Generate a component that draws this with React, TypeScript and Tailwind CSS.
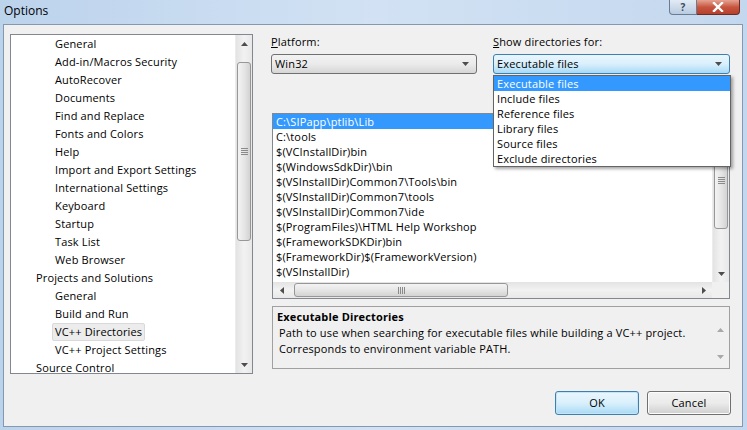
import React from "react";

const font = { fontFamily: '"Open Sans", "Noto Sans", sans-serif' };

function Arrow({ dir, faded }: { dir: "up" | "down" | "left" | "right"; faded?: boolean }) {
  const pts = {
    up: "0,4 3.5,0 7,4",
    down: "0,0 3.5,4 7,0",
    left: "4,0 0,3.5 4,7",
    right: "0,0 4,3.5 0,7",
  }[dir];
  const w = dir === "up" || dir === "down" ? 7 : 4;
  const h = dir === "up" || dir === "down" ? 4 : 7;
  return (
    <svg width={w} height={h} viewBox={`0 0 ${w} ${h}`}>
      <polygon points={pts} fill={faded ? "#a8a8a8" : "#4d4d4d"} />
    </svg>
  );
}

function Grip({ vertical }: { vertical?: boolean }) {
  return vertical ? (
    <div className="flex flex-col gap-[1px]">
      <div className="w-[7px] h-[1px] bg-[#8a8a8a]" />
      <div className="w-[7px] h-[1px] bg-[#8a8a8a]" />
      <div className="w-[7px] h-[1px] bg-[#8a8a8a]" />
      <div className="w-[7px] h-[1px] bg-[#8a8a8a]" />
    </div>
  ) : (
    <div className="flex gap-[1px]">
      <div className="h-[7px] w-[1px] bg-[#8a8a8a]" />
      <div className="h-[7px] w-[1px] bg-[#8a8a8a]" />
      <div className="h-[7px] w-[1px] bg-[#8a8a8a]" />
      <div className="h-[7px] w-[1px] bg-[#8a8a8a]" />
    </div>
  );
}

function VScroll({ thumbTop, thumbHeight }: { thumbTop: number; thumbHeight: number }) {
  return (
    <div className="w-[17px] h-full flex flex-col bg-gradient-to-r from-[#e3e3e3] via-[#f2f2f2] to-[#e8e8e8] border-l border-[#ececec]">
      <div className="h-[17px] flex items-center justify-center shrink-0">
        <Arrow dir="up" />
      </div>
      <div className="flex-1 relative">
        <div
          className="absolute left-[1px] right-[1px] rounded-[3px] border border-[#979797] bg-gradient-to-r from-[#f3f3f3] via-[#e6e6e6] to-[#d3d3d3] flex items-center justify-center"
          style={{ top: thumbTop, height: thumbHeight }}
        >
          <Grip vertical />
        </div>
      </div>
      <div className="h-[17px] flex items-center justify-center shrink-0">
        <Arrow dir="down" />
      </div>
    </div>
  );
}

const treeItems: [string, number][] = [
  ["General", 1],
  ["Add-in/Macros Security", 1],
  ["AutoRecover", 1],
  ["Documents", 1],
  ["Find and Replace", 1],
  ["Fonts and Colors", 1],
  ["Help", 1],
  ["Import and Export Settings", 1],
  ["International Settings", 1],
  ["Keyboard", 1],
  ["Startup", 1],
  ["Task List", 1],
  ["Web Browser", 1],
  ["Projects and Solutions", 0],
  ["General", 1],
  ["Build and Run", 1],
  ["VC++ Directories", 1],
  ["VC++ Project Settings", 1],
  ["Source Control", 0],
];

const dirs = [
  "C:\\SIPapp\\ptlib\\Lib",
  "C:\\tools",
  "$(VCInstallDir)bin",
  "$(WindowsSdkDir)\\bin",
  "$(VSInstallDir)Common7\\Tools\\bin",
  "$(VSInstallDir)Common7\\tools",
  "$(VSInstallDir)Common7\\ide",
  "$(ProgramFiles)\\HTML Help Workshop",
  "$(FrameworkSDKDir)bin",
  "$(FrameworkDir)$(FrameworkVersion)",
  "$(VSInstallDir)",
];

const kinds = [
  "Executable files",
  "Include files",
  "Reference files",
  "Library files",
  "Source files",
  "Exclude directories",
];

export default function App() {
  return (
    <div
      className="w-[747px] h-[430px] overflow-hidden flex flex-col bg-gradient-to-r from-[#bcd3ec] via-[#d2e2f4] to-[#c3d7ee] text-[11px] tracking-[0.15px] text-black"
      style={font}
    >
      {/* title bar */}
      <div className="h-[24px] shrink-0 flex items-start relative">
        <span className="ml-[4px] mt-[2px] text-[12px] leading-[18px] tracking-normal">Options</span>
        <div className="ml-auto mr-[7px] flex">
          <div className="w-[28px] h-[15px] rounded-bl-[4px] border border-t-0 border-[#6b7c92] bg-gradient-to-b from-[#e2ebf5] to-[#b9cbe0] flex items-center justify-center text-[10px] leading-none font-bold text-[#3b4a5c]">
            ?
          </div>
          <div className="w-[43px] h-[15px] rounded-br-[4px] border border-t-0 border-l-0 border-[#6f2a22] bg-gradient-to-b from-[#e5a393] via-[#c8553f] to-[#b5402c] flex items-center justify-center">
            <svg width="12" height="10" viewBox="0 0 12 10">
              <path d="M2 1 L10 9 M10 1 L2 9" stroke="#fff" strokeWidth="2.4" strokeLinecap="square" />
            </svg>
          </div>
        </div>
      </div>

      {/* client area */}
      <div className="flex-1 ml-[3px] mr-[4px] mb-[3px] bg-[#f0f0f0] border border-[#8498b0] flex flex-col">
        <div className="flex pt-[9px] pl-[6px]">
          {/* tree */}
          <div className="w-[243px] h-[340px] border border-[#828790] bg-white flex overflow-hidden">
            <div className="flex-1 flex flex-col">
              {treeItems.map(([label, level], i) => (
                <div key={i} className="h-[18px] shrink-0 flex items-center">
                  <span
                    className={
                      level === 1
                        ? i === 16
                          ? "ml-[41px] px-[2px] h-[18px] leading-[16px] rounded-[2px] border border-[#d9d9d9] bg-[#ececec]"
                          : "ml-[44px]"
                        : "ml-[25px]"
                    }
                  >
                    {label}
                  </span>
                </div>
              ))}
            </div>
            <VScroll thumbTop={10} thumbHeight={179} />
          </div>

          {/* right column */}
          <div className="ml-[18px] w-[459px] flex flex-col">
            <div className="flex relative">
              <div className="w-[206px] flex flex-col">
                <span className="leading-[14px] mt-[1px]">
                  <span className="underline">P</span>latform:
                </span>
                <div className="mt-[5px] h-[20px] rounded-[3px] border border-[#707070] bg-gradient-to-b from-[#f2f2f2] via-[#ebebeb] to-[#d6d6d6] flex items-center pl-[3px] pr-[7px]">
                  <span className="flex-1">Win32</span>
                  <Arrow dir="down" />
                </div>
              </div>
              <div className="ml-[16px] w-[237px] flex flex-col">
                <span className="leading-[14px] mt-[1px]">
                  <span className="underline">S</span>how directories for:
                </span>
                <div className="mt-[5px] h-[20px] rounded-[3px] border border-[#3c7fb1] bg-gradient-to-b from-[#eaf6fd] via-[#d9f0fc] to-[#a7d9f5] flex items-center pl-[3px] pr-[7px]">
                  <span className="flex-1">Executable files</span>
                  <Arrow dir="down" />
                </div>
              </div>
              {/* dropdown */}
              <div className="absolute left-[222px] top-[41px] w-[238px] z-10 bg-white border border-[#646464] shadow-[2px_2px_3px_rgba(0,0,0,0.35)] flex flex-col">
                {kinds.map((k, i) => (
                  <div
                    key={k}
                    className={
                      "h-[15px] leading-[15px] pl-[3px] " + (i === 0 ? "bg-[#3399ff] text-white" : "")
                    }
                  >
                    {k}
                  </div>
                ))}
              </div>
            </div>

            {/* list */}
            <div className="mt-[39px] ml-[1px] w-[458px] h-[186px] border border-[#828790] bg-white flex flex-col">
              <div className="flex-1 flex min-h-0">
                <div className="flex-1 flex flex-col">
                  {dirs.map((d, i) => (
                    <div
                      key={i}
                      className={
                        "h-[15px] leading-[15px] pl-[3px] " + (i === 0 ? "bg-[#3399ff] text-white" : "")
                      }
                    >
                      {d}
                    </div>
                  ))}
                </div>
                <VScroll thumbTop={1} thumbHeight={97} />
              </div>
              <div className="h-[16px] shrink-0 flex bg-gradient-to-b from-[#e3e3e3] via-[#f2f2f2] to-[#e8e8e8]">
                <div className="w-[17px] flex items-center justify-center">
                  <Arrow dir="left" />
                </div>
                <div className="flex-1 relative">
                  <div className="absolute top-[1px] bottom-[1px] left-[4px] w-[214px] rounded-[3px] border border-[#979797] bg-gradient-to-b from-[#f3f3f3] via-[#e6e6e6] to-[#d3d3d3] flex items-center justify-center">
                    <Grip />
                  </div>
                </div>
                <div className="w-[17px] flex items-center justify-center">
                  <Arrow dir="right" />
                </div>
                <div className="w-[17px] bg-[#f0f0f0]" />
              </div>
            </div>

            {/* description */}
            <div className="mt-[7px] ml-[1px] w-[458px] h-[63px] border border-[#a0a0a0] flex">
              <div className="flex-1 flex flex-col pl-[4px] pt-[1px]">
                <span className="font-bold leading-[17px]">Executable Directories</span>
                <span className="pl-[2px] leading-[16px]">
                  Path to use when searching for executable files while building a VC++ project.
                </span>
                <span className="pl-[2px] leading-[16px]">Corresponds to environment variable PATH.</span>
              </div>
              <div className="w-[17px] flex flex-col items-center pt-[21px] gap-[23px]">
                <Arrow dir="up" faded />
                <Arrow dir="down" faded />
              </div>
            </div>
          </div>
        </div>

        {/* buttons */}
        <div className="flex justify-end gap-[8px] mt-[17px] mr-[11px]">
          <button className="w-[84px] h-[24px] rounded-[3px] border border-[#3c7fb1] bg-gradient-to-b from-[#eaf6fd] via-[#d9f0fc] to-[#a7d9f5] shadow-[inset_0_0_0_1px_#c4e5f6]">
            OK
          </button>
          <button className="w-[84px] h-[24px] rounded-[3px] border border-[#707070] bg-gradient-to-b from-[#f2f2f2] via-[#ebebeb] to-[#cfcfcf] shadow-[inset_0_0_0_1px_#fcfcfc]">
            Cancel
          </button>
        </div>
      </div>
    </div>
  );
}
